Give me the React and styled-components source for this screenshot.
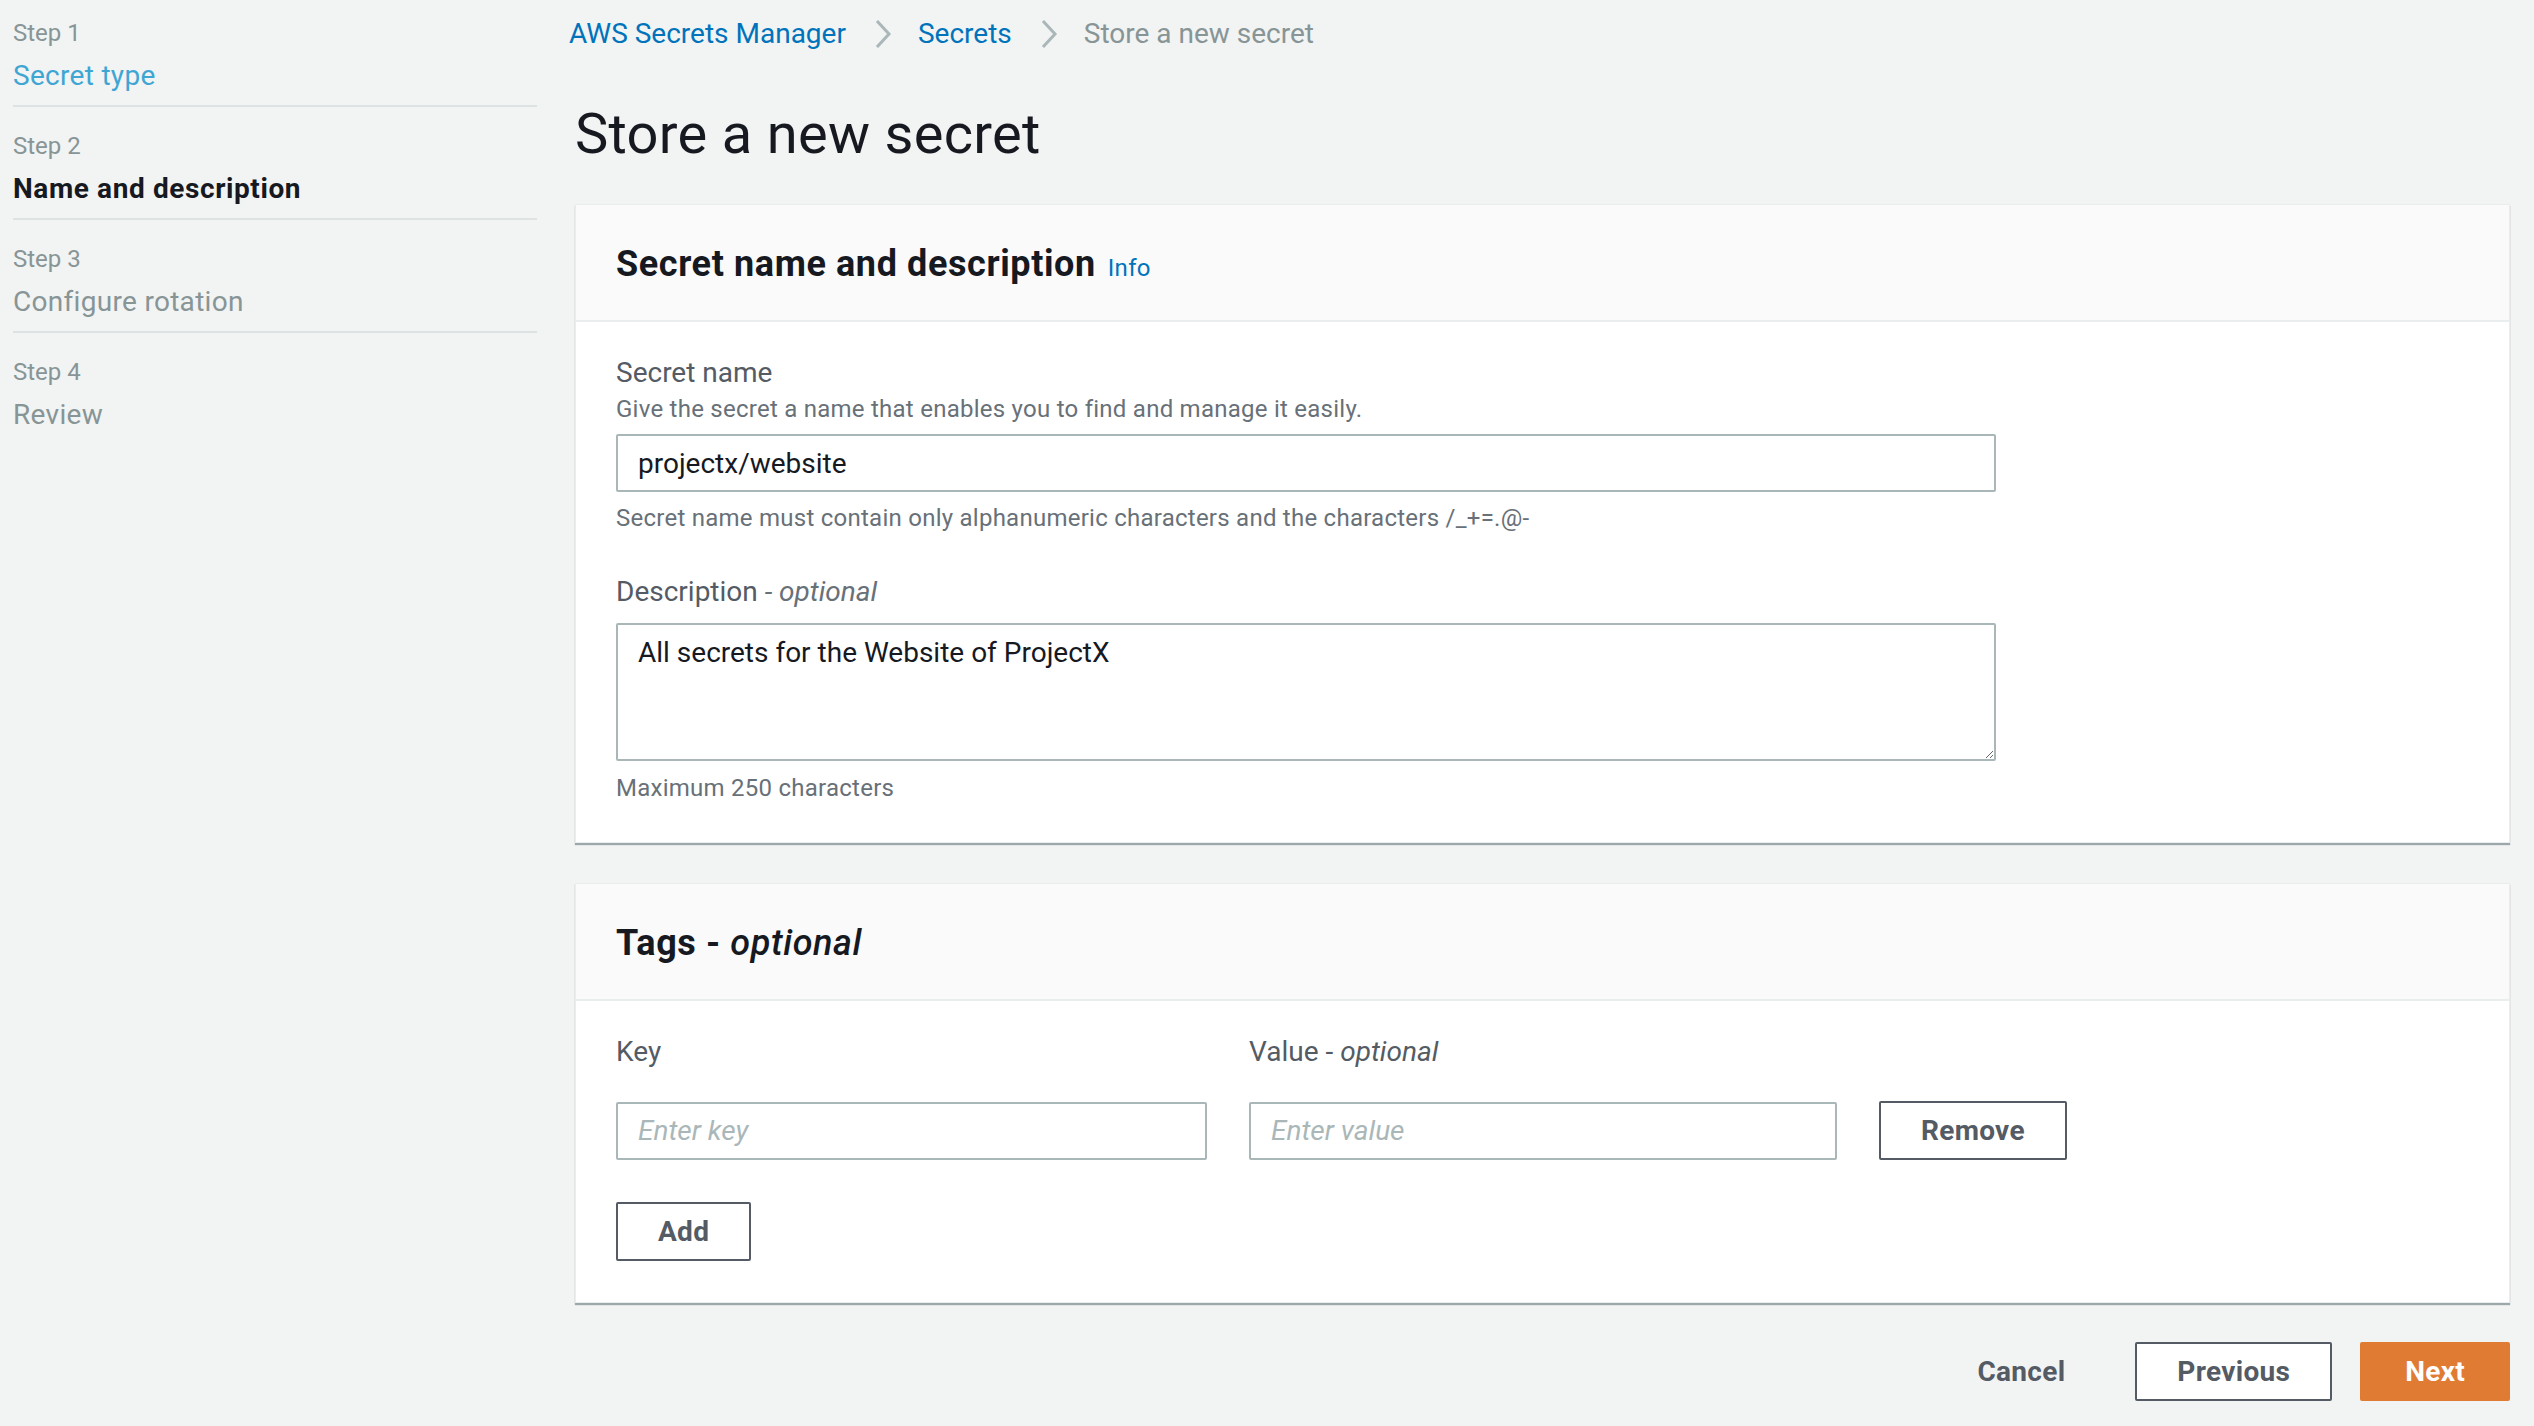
import React from 'react';
import styled, { createGlobalStyle } from 'styled-components';

const GlobalStyle = createGlobalStyle`
  html, body {
    margin: 0;
    padding: 0;
    background: #f2f3f3;
  }
  body {
    font-family: Roboto, "Liberation Sans", Arial, sans-serif;
    color: #16191f;
  }
  * { box-sizing: border-box; }
`;

const Page = styled.div`
  display: grid;
  grid-template-columns: 524px 1fr;
  column-gap: 38px;
  padding: 0 24px 0 13px;
  min-height: 1426px;
`;

// left wizard navigation
const StepList = styled.ol`
  list-style: none;
  margin: 0;
  padding: 0;
`;

const StepItem = styled.li`
  padding: 22px 0 3px;
  border-bottom: 2px solid #dde2e2;
  &:first-child { padding-top: 16px; }
  &:last-child { border-bottom: none; }
`;

const StepLabel = styled.div`
  font-size: 24px;
  line-height: 34px;
  color: #879596;
`;

const stepColors = { link: '#3fa6d3', current: '#16191f', disabled: '#879596' };

const StepName = styled.div`
  font-size: 28px;
  line-height: 52px;
  letter-spacing: ${p => (p.$state === 'current' ? 0.6 : 0.3)}px;
  color: ${p => stepColors[p.$state]};
  font-weight: ${p => (p.$state === 'current' ? 700 : 400)};
`;

const Main = styled.main`
  padding-top: 14px;
`;

const Crumbs = styled.nav`
  display: flex;
  align-items: center;
  font-size: 28px;
  line-height: 40px;
  height: 40px;
  margin-left: -6px;
`;

const CrumbLink = styled.a`
  color: #0073bb;
  text-decoration: none;
`;

const CrumbCurrent = styled.span`
  color: #879596;
`;

const Chevron = styled.svg`
  margin: 0 25px 0 27px;
  flex: none;
`;

const Title = styled.h1`
  font-size: 56px;
  line-height: 72px;
  font-weight: 400;
  letter-spacing: 0.3px;
  margin: 44px 0 34px;
  color: #16191f;
`;

const Panel = styled.section`
  background: #fff;
  border: 1px solid #eaeded;
  box-shadow: 0 2px 1px 0 rgba(0, 28, 36, 0.35);
  margin-bottom: 40px;
`;

const PanelHeader = styled.header`
  background: #fafafa;
  border-bottom: 2px solid #eaeded;
  padding: 35px 40px 32px;
`;

const PanelTitle = styled.h2`
  margin: 0;
  font-size: 36px;
  line-height: 48px;
  font-weight: 700;
  letter-spacing: 0.6px;
  color: #16191f;
  em { font-style: italic; font-weight: 500; }
`;

const InfoLink = styled.a`
  font-size: 24px;
  line-height: 24px;
  font-weight: 400;
  letter-spacing: 0.3px;
  color: #0073bb;
  margin-left: 12px;
  text-decoration: none;
`;

const PanelBody = styled.div`
  padding: 31px 40px ${p => p.$bottom || 38}px;
`;

const Field = styled.div`
  & + & { margin-top: 38px; }
`;

const Label = styled.label`
  display: block;
  font-size: 28px;
  line-height: 40px;
  color: #545b64;
  i { color: ${p => (p.$muted ? '#687078' : '#545b64')}; }
`;

const Hint = styled.div`
  font-size: 24px;
  line-height: 32px;
  letter-spacing: 0.25px;
  color: #687078;
  margin-top: ${p => p.$top || 0}px;
`;

const TextInput = styled.input`
  display: block;
  width: ${p => p.$width || 1380}px;
  height: 58px;
  margin-top: ${p => p.$top || 0}px;
  padding: 0 20px;
  border: 2px solid #aab7b8;
  border-radius: 2px;
  font-family: inherit;
  font-size: 28px;
  color: #16191f;
  background: #fff;
  &::placeholder { color: #aab7b8; font-style: italic; }
`;

const TextArea = styled.textarea`
  display: block;
  width: 1380px;
  height: 138px;
  margin-top: 11px;
  padding: 8px 20px;
  border: 2px solid #aab7b8;
  border-radius: 2px;
  font-family: inherit;
  font-size: 28px;
  line-height: 40px;
  color: #16191f;
`;

const TagGrid = styled.div`
  display: grid;
  grid-template-columns: 591px 588px auto;
  column-gap: 42px;
  row-gap: 29px;
  align-items: center;
  justify-items: start;
`;

const Button = styled.button`
  height: 59px;
  padding: 0 ${p => p.$pad || 40}px;
  border-radius: 2px;
  font-family: inherit;
  font-size: 28px;
  font-weight: 700;
  letter-spacing: 0.3px;
  cursor: pointer;
  border: 2px solid ${p => (p.$variant === 'primary' ? '#e07b34' : p.$variant === 'link' ? 'transparent' : '#545b64')};
  background: ${p => (p.$variant === 'primary' ? '#e07b34' : p.$variant === 'link' ? 'transparent' : '#fff')};
  color: ${p => (p.$variant === 'primary' ? '#fff' : '#545b64')};
  margin-top: ${p => p.$top || 0}px;
`;

const Footer = styled.div`
  display: flex;
  justify-content: flex-end;
  align-items: center;
  gap: 28px;
  margin-top: -1px;
`;

const steps = [
  { n: 1, name: 'Secret type', state: 'link' },
  { n: 2, name: 'Name and description', state: 'current' },
  { n: 3, name: 'Configure rotation', state: 'disabled' },
  { n: 4, name: 'Review', state: 'disabled' },
];

const Sep = () => (
  <Chevron width="20" height="30" viewBox="0 0 20 30">
    <polyline points="4,2 16,15 4,28" fill="none" stroke="#aab7b8" strokeWidth="3" />
  </Chevron>
);

export default function App() {
  return (
    <>
      <GlobalStyle />
      <Page>
        <StepList>
          {steps.map(s => (
            <StepItem key={s.n}>
              <StepLabel>Step {s.n}</StepLabel>
              <StepName $state={s.state}>{s.name}</StepName>
            </StepItem>
          ))}
        </StepList>

        <Main>
          <Crumbs>
            <CrumbLink href="#">AWS Secrets Manager</CrumbLink>
            <Sep />
            <CrumbLink href="#">Secrets</CrumbLink>
            <Sep />
            <CrumbCurrent>Store a new secret</CrumbCurrent>
          </Crumbs>

          <Title>Store a new secret</Title>

          <Panel>
            <PanelHeader>
              <PanelTitle>
                Secret name and description<InfoLink href="#">Info</InfoLink>
              </PanelTitle>
            </PanelHeader>
            <PanelBody>
              <Field>
                <Label>Secret name</Label>
                <Hint>Give the secret a name that enables you to find and manage it easily.</Hint>
                <TextInput $top={9} defaultValue="projectx/website" />
                <Hint $top={10}>Secret name must contain only alphanumeric characters and the characters /_+=.@-</Hint>
              </Field>
              <Field>
                <Label $muted>Description <i>- optional</i></Label>
                <TextArea defaultValue="All secrets for the Website of ProjectX" />
                <Hint $top={11}>Maximum 250 characters</Hint>
              </Field>
            </PanelBody>
          </Panel>

          <Panel>
            <PanelHeader>
              <PanelTitle>
                Tags - <em>optional</em>
              </PanelTitle>
            </PanelHeader>
            <PanelBody $bottom={41}>
              <TagGrid>
                <Label>Key</Label>
                <Label>Value - <i>optional</i></Label>
                <span />
                <TextInput $width={591} placeholder="Enter key" />
                <TextInput $width={588} placeholder="Enter value" />
                <Button>Remove</Button>
              </TagGrid>
              <Button $top={42}>Add</Button>
            </PanelBody>
          </Panel>

          <Footer>
            <Button $variant="link">Cancel</Button>
            <Button>Previous</Button>
            <Button $variant="primary" $pad={43}>Next</Button>
          </Footer>
        </Main>
      </Page>
    </>
  );
}
